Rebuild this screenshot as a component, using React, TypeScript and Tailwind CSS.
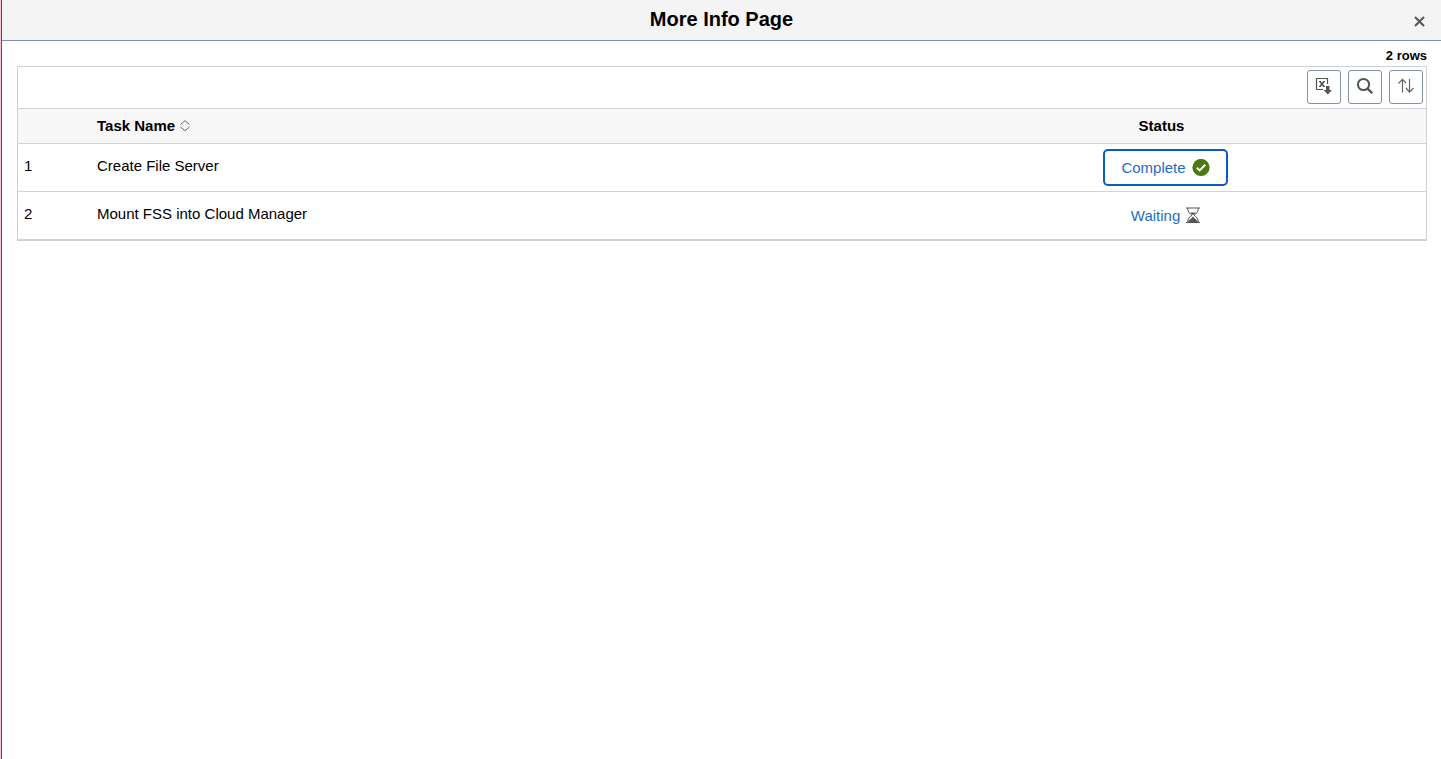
import React from "react";

type Status = "Complete" | "Waiting";

const tasks: { id: number; name: string; status: Status }[] = [
  { id: 1, name: "Create File Server", status: "Complete" },
  { id: 2, name: "Mount FSS into Cloud Manager", status: "Waiting" },
];

function ExportIcon() {
  return (
    <svg width="18" height="18" viewBox="0 0 18 18" fill="none" stroke="#555" aria-hidden="true">
      <path d="M12.5 7V1.5H1.5V12.500H8" strokeWidth="1.200" />
      <path d="M5 4.5L9 9.500M9 4.500L5 9.500" strokeWidth="1.700" />
      <path d="M4 4.500H6M8 4.500H10M4 9.500H6M8 9.500H10" strokeWidth="1" />
      <path d="M11 9H14.500V13H17L12.750 17.500L8.500 13H11Z" fill="#555" stroke="none" />
    </svg>
  );
}

function SearchIcon() {
  return (
    <svg width="18" height="18" viewBox="0 0 18 18" fill="none" stroke="#555" aria-hidden="true">
      <circle cx="7.500" cy="7.500" r="5.600" strokeWidth="2" />
      <path d="M11.600 11.600L16.300 16.300" strokeWidth="2.300" />
    </svg>
  );
}

function SortIcon() {
  return (
    <svg width="18" height="18" viewBox="0 0 18 18" fill="none" stroke="#666" strokeWidth="1.200" aria-hidden="true">
      <path d="M5.500 15.500V2.500M1.500 6.500L5.500 2.300L9 6" />
      <path d="M12.500 2V15M9 11L12.500 15L16.500 11" />
    </svg>
  );
}

function StatusIcon({ status }: { status: Status }) {
  if (status === "Complete") {
    return (
      <svg width="18" height="18" viewBox="0 0 18 18" fill="none" aria-hidden="true">
        <circle cx="9" cy="8.500" r="8.600" fill="#4a7a0c" />
        <path d="M4.800 8.700L7.700 11.400L13.200 5.800" stroke="#fff" strokeWidth="2" />
      </svg>
    );
  }
  return (
    <svg width="14" height="18" viewBox="0 0 14 18" fill="none" stroke="#555" aria-hidden="true">
      <path d="M0 1H14M0 15.500H14" strokeWidth="1.200" />
      <path d="M1.700 1C1.700 4.500 3.500 6.800 6 8.300C3.500 9.800 1.700 11.500 1.700 15.500M12.300 1C12.300 4.500 10.500 6.800 8 8.300C10.500 9.800 12.300 11.500 12.300 15.500" strokeWidth="1" />
      <path d="M4 5.500H10L7 8.300ZM2 15.500C2.500 13 5 12 7 9.500C9 12 11.500 13 12 15.500Z" fill="#555" stroke="none" />
    </svg>
  );
}

function ToolButton({ label, children }: { label: string; children: React.ReactNode }) {
  return (
    <button
      type="button"
      aria-label={label}
      className="flex h-[34px] w-[34px] items-center justify-center rounded-[3px] border border-[#84909d] bg-white pb-0.5"
    >
      {children}
    </button>
  );
}

export default function App() {
  return (
    <div className="min-h-screen border-l border-[#f4c3da] bg-white font-['Liberation_Sans',Arial,sans-serif] text-[15px] leading-5 text-black">
      <div className="min-h-screen border-l border-[#555]">
        <header className="grid h-[41px] grid-cols-[1fr_auto_1fr] items-center border-b border-[#84909d] bg-[#f4f4f4]">
          <h1 className="col-start-2 pb-0.5 text-xl leading-6 font-bold">More Info Page</h1>
          <button type="button" aria-label="Close" className="mt-0.5 mr-4 justify-self-end">
            <svg width="11" height="11" viewBox="0 0 11 11" stroke="#555" strokeWidth="2" aria-hidden="true">
              <path d="M1 1L10 10M10 1L1 10" />
            </svg>
          </button>
        </header>
        <main className="pt-1 pr-3.5 pl-[15px]">
          <p className="pt-px text-right text-[13px] font-bold">2 rows</p>
          <section className="border border-b-2 border-[#cfd3d9]">
            <div className="flex justify-end gap-[7px] px-[3px] pt-[3px] pb-1">
              <ToolButton label="Download to Excel"><ExportIcon /></ToolButton>
              <ToolButton label="Find"><SearchIcon /></ToolButton>
              <ToolButton label="Sort"><SortIcon /></ToolButton>
            </div>
            <table className="w-full table-fixed border-separate border-spacing-0 text-left">
              <colgroup>
                <col className="w-[72px]" />
                <col />
                <col className="w-[37%]" />
              </colgroup>
              <thead>
                <tr className="h-9 bg-[#f7f7f7]">
                  <td className="border-y border-[#cfd3d9]" />
                  <th className="border-y border-[#cfd3d9] px-[7px] font-bold">
                    <button type="button" className="flex items-center gap-1 font-bold">
                      Task Name
                      <svg width="12" height="12" viewBox="0 0 12 12" fill="none" stroke="#666" aria-hidden="true">
                        <path d="M1.500 4.500L6 0.700L10.500 4.500M1.500 6.900L6 10.700L10.500 6.900" />
                      </svg>
                    </button>
                  </th>
                  <th className="border-y border-[#cfd3d9] pr-2 text-center font-bold">Status</th>
                </tr>
              </thead>
              <tbody>
                {tasks.map((task) => (
                  <tr key={task.id} className="group align-top">
                    <td className="border-[#cfd3d9] px-1.5 pt-3 group-not-last:border-b">{task.id}</td>
                    <td className="border-[#cfd3d9] px-[7px] pt-3 group-not-last:border-b">{task.name}</td>
                    <td className="border-[#cfd3d9] py-[5px] group-not-last:border-b">
                      <button
                        type="button"
                        className={
                          "mx-auto flex h-[37px] items-center gap-1.5 rounded-[5px] border-2 px-4 text-[#1f6dc9] " +
                          (task.status === "Complete" ? "border-[#0a5bc4]" : "border-transparent")
                        }
                      >
                        {task.status}
                        <StatusIcon status={task.status} />
                      </button>
                    </td>
                  </tr>
                ))}
              </tbody>
            </table>
          </section>
        </main>
      </div>
    </div>
  );
}
